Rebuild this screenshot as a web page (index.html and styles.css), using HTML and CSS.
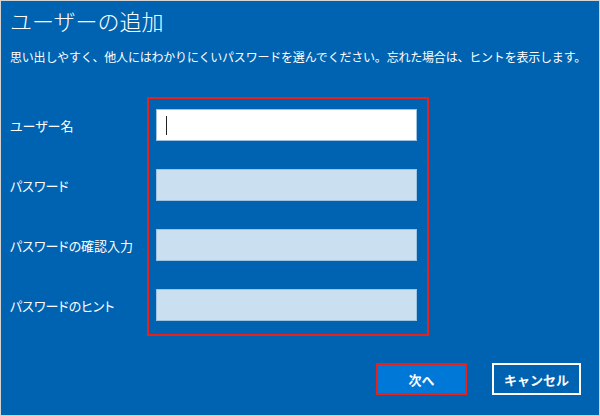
FILE: index.html
```html
<!DOCTYPE html>
<html lang="ja">
  <head>
    <meta charset="UTF-8" />
    <title>ユーザーの追加</title>
    <link rel="stylesheet" href="styles.css">
  </head>
  <body>
    <div class="window">
      <h1>ユーザーの追加</h1>
      <p class="lead">思い出しやすく、他人にはわかりにくいパスワードを選んでください。忘れた場合は、ヒントを表示します。</p>
      <form class="user-form">
        <div class="labels">
          <label for="user">ユーザー名</label>
          <label for="pass">パスワード</label>
          <label for="pass2">パスワードの確認入力</label>
          <label for="hint">パスワードのヒント</label>
        </div>
        <div class="fields">
          <div class="field active"><span class="caret"></span></div>
          <div class="field"></div>
          <div class="field"></div>
          <div class="field"></div>
        </div>
      </form>
      <div class="actions">
        <button class="btn btn-next">次へ</button>
        <button class="btn btn-cancel">キャンセル</button>
      </div>
    </div>
  </body>
</html>
```

FILE: styles.css
```css
body {
  margin: 0;
  font-family: "Noto Sans CJK JP", "Noto Sans", sans-serif;
}
.window {
  width: 600px;
  height: 416px;
  box-sizing: border-box;
  border: 1px solid #d4d4d4;
  background-color: #0063b1;
  color: #ffffff;
  padding: 4px 9px 0;
}
.window h1 {
  margin: 0;
  font-size: 22px;
  font-weight: 300;
  line-height: 30px;
}
.lead {
  margin: 13px 0 0;
  font-size: 12px;
  line-height: 18px;
  letter-spacing: -0.2px;
  white-space: nowrap;
}
.user-form {
  display: flex;
  margin-top: 31px;
}
.labels {
  width: 137px;
  display: flex;
  flex-direction: column;
  gap: 28px;
  padding-top: 12px;
}
.labels label {
  height: 32px;
  display: flex;
  align-items: center;
  font-size: 13px;
  font-feature-settings: "palt";
}
.fields {
  width: 282px;
  box-sizing: border-box;
  border: 2px solid #e8221b;
  padding: 10px 10px 13px 7px;
  display: flex;
  flex-direction: column;
  gap: 28px;
}
.field {
  height: 32px;
  box-sizing: border-box;
  border: 1px solid #9ec3e3;
  background-color: #cadff0;
  position: relative;
}
.field.active {
  background-color: #ffffff;
}
.caret {
  position: absolute;
  left: 9px;
  top: 6px;
  width: 1px;
  height: 19px;
  background-color: #222222;
}
.actions {
  display: flex;
  justify-content: flex-end;
  gap: 25px;
  margin-top: 27px;
  padding-right: 9px;
}
.btn {
  height: 32px;
  font-family: inherit;
  font-size: 13px;
  font-weight: bold;
  color: #ffffff;
  cursor: pointer;
}
.btn-next {
  width: 91px;
  background-color: #0078d7;
  border: 2px solid #e8221b;
}
.btn-cancel {
  width: 89px;
  background-color: #0063b1;
  border: 2px solid #ffffff;
}
```
